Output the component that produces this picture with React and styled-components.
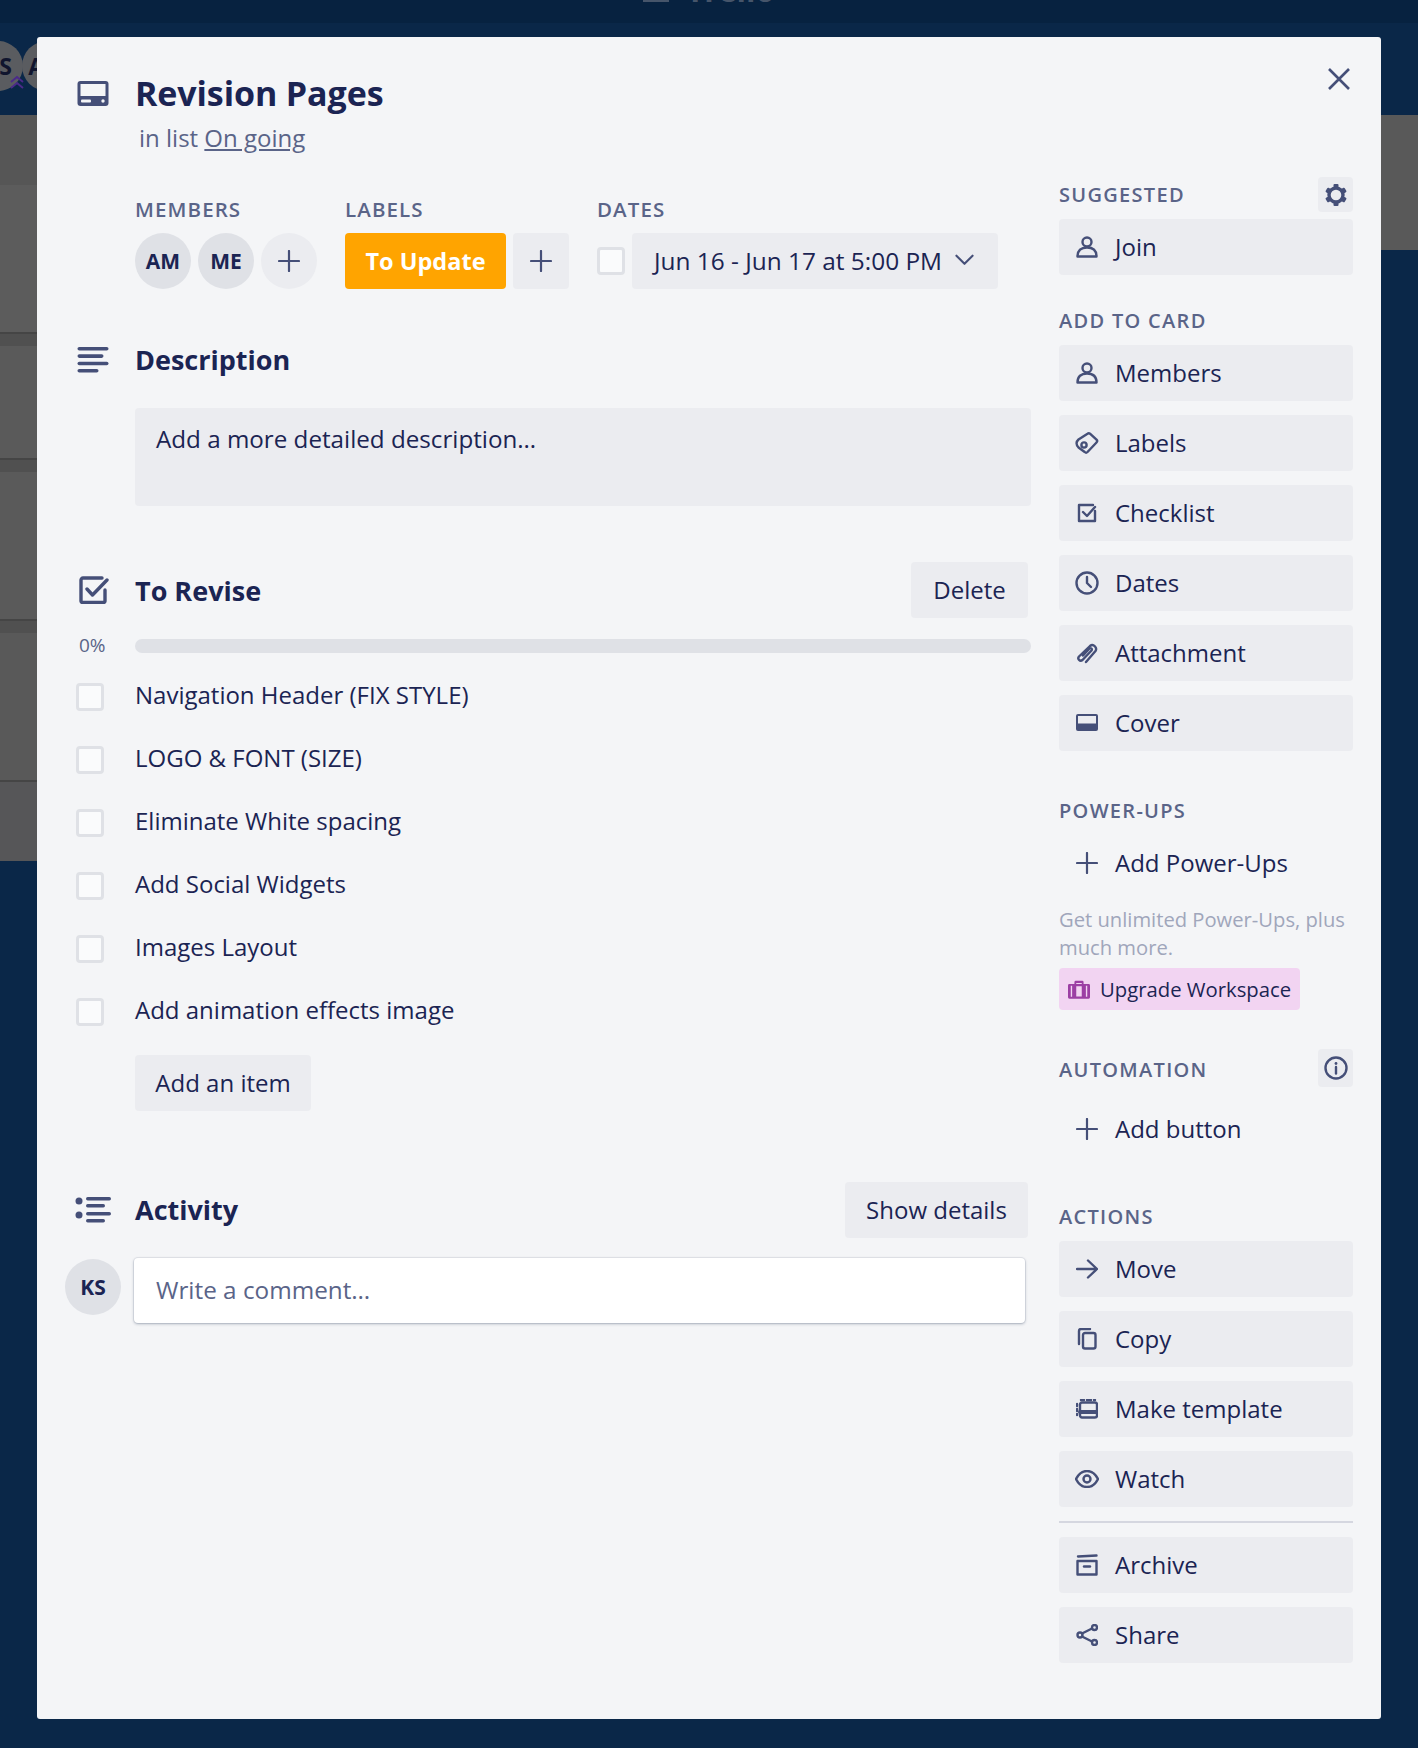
import React from "react"
import styled, { createGlobalStyle } from "styled-components"

const GlobalStyle = createGlobalStyle`
  html, body {
    margin: 0;
    padding: 0;
    background: #0a2748;
  }
  body {
    font-family: "Open Sans", "Noto Sans", sans-serif;
    color: #1b2453;
  }
`

const ink = "#454f78"

const Page = styled.div`
  position: relative;
  width: 1418px;
  height: 1748px;
  overflow: hidden;
  background: #0a2748;
`
const TopBar = styled.div`
  height: 23px;
  background: #072240;
  display: flex;
  justify-content: center;
  overflow: hidden;
  color: #46556a;
`
const TopLogo = styled.div`
  display: flex;
  align-items: flex-end;
  gap: 17px;
  height: 2px;
  font-size: 31px;
  font-weight: 700;
  line-height: 1;
`
const LogoMark = styled.span`
  display: block;
  width: 26px;
  height: 26px;
  background: #46556a;
`
const LogoText = styled.span`
  margin-bottom: -4px;
`
const AvatarStrip = styled.div`
  height: 92px;
  position: relative;
`
const BackAvatar = styled.div`
  position: absolute;
  top: 18px;
  left: ${(p) => p.$x}px;
  width: 50px;
  height: 50px;
  border-radius: 50%;
  background: #5a5c60;
  color: #10152e;
  font-size: 23px;
  font-weight: 700;
  line-height: 50px;
  text-align: center;
`
const BackChevron = styled.svg`
  position: absolute;
  top: 52px;
  left: 9px;
  width: 16px;
  height: 15px;
`
const Lists = styled.div`
  display: flex;
  justify-content: space-between;
`
const LeftEdge = styled.div`
  width: 37px;
  display: flex;
  flex-direction: column;
`
const EdgeStripe = styled.div`
  height: ${(p) => p.$h}px;
  background: ${(p) => p.$bg};
  border-top: ${(p) => (p.$line ? "2px solid #454545" : "none")};
  box-sizing: border-box;
`
const RightEdge = styled.div`
  width: 37px;
  height: 135px;
  background: #595959;
`

const Modal = styled.div`
  position: absolute;
  left: 37px;
  top: 37px;
  width: 1344px;
  height: 1682px;
  border-radius: 3px;
  background: #f4f5f7;
`
const CloseIcon = styled.svg`
  position: absolute;
  right: 30px;
  top: 30px;
  width: 24px;
  height: 24px;
`
const ModalBody = styled.div`
  display: grid;
  grid-template-columns: 994px 294px;
  column-gap: 28px;
`
const Main = styled.div`
  padding-top: 37px;
`
const Row = styled.div`
  display: grid;
  grid-template-columns: 98px 1fr;
  align-items: center;
  height: ${(p) => p.$h || 40}px;
  margin-top: ${(p) => p.$top || 0}px;
`
const IconCell = styled.div`
  display: flex;
  padding-left: ${(p) => p.$left ?? 40}px;
  align-items: center;
`
const RowContent = styled.div`
  display: flex;
  align-items: center;
  justify-content: space-between;
  padding-right: 3px;
`
const Title = styled.h1`
  margin: 0;
  padding-bottom: 2px;
  font-size: 34px;
  font-weight: 700;
  line-height: 38px;
  letter-spacing: -0.1px;
`
const SubTitle = styled.div`
  margin-top: 6px;
  padding-left: 102px;
  height: 36px;
  font-size: 24px;
  line-height: 36px;
  color: #5a6488;

  a {
    color: #5a6488;
    text-decoration: underline;
  }
`
const Heading = styled.h2`
  margin: 0;
  padding-top: ${(p) => (p.$low ? 2 : 0)}px;
  font-size: 27px;
  font-weight: 700;
  line-height: 38px;
`
const Meta = styled.div`
  display: flex;
  margin: 39px 0 0 98px;
`
const MetaGroup = styled.div`
  width: ${(p) => p.$w}px;
`
const MetaLabel = styled.div`
  height: 28px;
  margin-bottom: 10px;
  font-size: 20.5px;
  font-weight: 600;
  letter-spacing: 1.1px;
  line-height: 28px;
  color: #5a6488;
`
const MetaItems = styled.div`
  display: flex;
  align-items: center;
  gap: 7px;
`
const Avatar = styled.div`
  width: 56px;
  height: 56px;
  flex: none;
  border-radius: 50%;
  background: ${(p) => (p.$add ? "#ebecf0" : "#dfe1e6")};
  display: flex;
  align-items: center;
  justify-content: center;
  font-size: 21px;
  font-weight: 700;
`
const LabelChip = styled.div`
  width: 161px;
  height: 56px;
  border-radius: 4px;
  background: #ffa400;
  color: #fff;
  font-size: 23.5px;
  font-weight: 700;
  line-height: 56px;
  text-align: center;
`
const SquareAdd = styled.div`
  width: 56px;
  height: 56px;
  border-radius: 4px;
  background: #ebecf0;
  display: flex;
  align-items: center;
  justify-content: center;
`
const Check = styled.div`
  width: 28px;
  height: 28px;
  flex: none;
  box-sizing: border-box;
  border: 3.5px solid #dfe1e6;
  border-radius: 4px;
  background: #fafbfc;
`
const DateButton = styled.div`
  width: 366px;
  height: 56px;
  border-radius: 4px;
  background: #ebecf0;
  box-sizing: border-box;
  padding: 0 24px 2px 22px;
  display: flex;
  align-items: center;
  justify-content: space-between;
  font-size: 24.4px;
  white-space: nowrap;
`
const DescBox = styled.div`
  margin: 28px 0 0 98px;
  height: 98px;
  border-radius: 4px;
  background: #ebecf0;
  box-sizing: border-box;
  padding: 14px 21px;
  font-size: 24.2px;
  line-height: 34px;
`
const GreyButton = styled.div`
  display: inline-flex;
  align-items: center;
  justify-content: center;
  height: 56px;
  width: ${(p) => p.$w}px;
  padding-bottom: 2px;
  box-sizing: border-box;
  border-radius: 4px;
  background: #ebecf0;
  font-size: 24px;
  white-space: nowrap;
  margin-left: ${(p) => p.$left || 0}px;
`
const Percent = styled.div`
  padding: 0 0 2px 42px;
  font-size: 19px;
  color: #5a6488;
`
const Track = styled.div`
  height: 14px;
  border-radius: 7px;
  background: #dfe1e6;
`
const Items = styled.div`
  margin-top: 3px;
  margin-bottom: 14px;
`
const Item = styled.div`
  display: grid;
  grid-template-columns: 98px 1fr;
  align-items: center;
  height: 63px;
  font-size: 24px;
`
const ItemCheck = styled.div`
  display: flex;
  padding: 4px 0 0 39px;
`
const CommentRow = styled.div`
  display: flex;
  gap: 13px;
  margin: 20px 0 0 28px;
`
const CommentAvatar = styled(Avatar)`
  margin-top: 1px;
`
const CommentBox = styled.div`
  width: 891px;
  height: 65px;
  box-sizing: border-box;
  padding: 0 22px;
  border-radius: 4px;
  background: #fff;
  box-shadow: 0 1px 3px rgba(9, 30, 66, 0.3), 0 0 0 1px rgba(9, 30, 66, 0.06);
  font-size: 24.3px;
  line-height: 63px;
  color: #5a6488;
`

const Sidebar = styled.aside`
  padding-top: 140px;
`
const SideHeader = styled.div`
  display: flex;
  align-items: center;
  justify-content: space-between;
  height: ${(p) => p.$h || 35}px;
  margin-top: ${(p) => p.$top || 0}px;
  margin-bottom: ${(p) => p.$bottom ?? 7}px;
`
const SideLabel = styled.div`
  padding-top: ${(p) => (p.$low ? 2 : 0)}px;
  font-size: 20px;
  font-weight: 600;
  letter-spacing: 1.3px;
  color: #5a6488;
`
const SmallIconButton = styled.div`
  width: 35px;
  height: ${(p) => p.$h || 35}px;
  border-radius: 4px;
  background: #ebecf0;
  display: flex;
  align-items: center;
  justify-content: center;
`
const SideStack = styled.div`
  display: flex;
  flex-direction: column;
  gap: 14px;
`
const SideButton = styled.div`
  height: 56px;
  display: flex;
  align-items: center;
  border-radius: 4px;
  background: ${(p) => (p.$plain ? "transparent" : "#ebecf0")};
  font-size: 24px;
  white-space: nowrap;
`
const SideText = styled.span`
  padding-bottom: 2px;
`
const SideIcon = styled.span`
  display: flex;
  align-items: center;
  justify-content: center;
  flex: none;
  width: 28px;
  margin: 0 14px;
`
const Hint = styled.div`
  margin-top: 14px;
  font-size: 20.2px;
  line-height: 28px;
  color: #a0a6bb;
`
const Upgrade = styled.div`
  display: inline-flex;
  align-items: center;
  gap: 10px;
  margin-top: 7px;
  width: 241px;
  box-sizing: border-box;
  height: 42px;
  padding-left: 9px;
  border-radius: 4px;
  background: #f2d4f2;
  font-size: 20.3px;
  white-space: nowrap;
`
const UpgradeRow = styled.div`
  display: flex;
`
const Divider = styled.div`
  height: 2px;
  background: #d5d7e0;
`

const strokeProps = {
  fill: "none",
  stroke: ink,
  strokeWidth: 2.4,
  strokeLinecap: "round",
  strokeLinejoin: "round",
}

const CardIcon = () => (
  <svg width="32" height="26" viewBox="0 0 32 26">
    <rect x="0.5" width="31" height="25" rx="3" fill={ink} />
    <rect x="3.5" y="3" width="25" height="12" fill="#f4f5f7" />
    <rect x="4" y="18.5" width="10" height="3" rx="1" fill="#f4f5f7" />
    <circle cx="26" cy="20" r="1.7" fill="#f4f5f7" />
  </svg>
)
const DescIcon = () => (
  <svg width="32" height="26" viewBox="0 0 32 26">
    <g fill={ink}>
      <rect y="0" x="0.5" width="31" height="3.6" rx="1.8" />
      <rect y="7.3" x="0.5" width="26" height="3.6" rx="1.8" />
      <rect y="14.7" x="0.5" width="31" height="3.6" rx="1.8" />
      <rect y="22" x="0.5" width="21" height="3.6" rx="1.8" />
    </g>
  </svg>
)
const CheckIcon = () => (
  <svg width="30" height="28" viewBox="0 0 30 28">
    <path d="M23 2H4a2 2 0 0 0-2 2v21a1.5 1.5 0 0 0 1.500 1.500h21a1.500 1.500 0 0 0 1.500-1.500V14" fill="none" stroke={ink} strokeWidth="3.4" strokeLinecap="round" />
    <path d="M8 13l5.500 6L28 4" fill="none" stroke={ink} strokeWidth="3.4" strokeLinecap="round" strokeLinejoin="round" />
  </svg>
)
const ActivityIcon = () => (
  <svg width="36" height="26" viewBox="0 0 36 26">
    <g fill={ink}>
      <circle cx="4" cy="4" r="3.500" />
      <circle cx="4" cy="18" r="3.500" />
      <rect x="11" y="0" width="25" height="3.4" rx="1.700" />
      <rect x="11" y="7" width="19" height="3.4" rx="1.700" />
      <rect x="11" y="15" width="25" height="3.4" rx="1.700" />
      <rect x="11" y="22" width="19" height="3.4" rx="1.700" />
    </g>
  </svg>
)
const Plus = ({ size = 22 }) => (
  <svg width={size} height={size} viewBox="0 0 22 22">
    <path d="M11 1v20M1 11h20" fill="none" stroke={ink} strokeWidth="2.2" strokeLinecap="round" />
  </svg>
)
const Chevron = () => (
  <svg width="19" height="12" viewBox="0 0 20 12">
    <path d="M1.500 1.500L10 10l8.500-8.500" fill="none" stroke={ink} strokeWidth="2.200" strokeLinecap="round" strokeLinejoin="round" />
  </svg>
)
const GearIcon = () => (
  <svg width="22" height="22" viewBox="0 0 22 22">
    <circle cx="11" cy="11" r="7" fill="none" stroke={ink} strokeWidth="3.400" />
    <g fill={ink}>
      <rect x="8.500" y="0" width="5" height="3.500" rx="1" />
      <rect x="8.500" y="18.500" width="5" height="3.500" rx="1" />
      <rect x="8.500" y="0" width="5" height="3.500" rx="1" transform="rotate(60 11 11)" />
      <rect x="8.500" y="0" width="5" height="3.500" rx="1" transform="rotate(120 11 11)" />
      <rect x="8.500" y="0" width="5" height="3.500" rx="1" transform="rotate(240 11 11)" />
      <rect x="8.500" y="0" width="5" height="3.500" rx="1" transform="rotate(300 11 11)" />
    </g>
  </svg>
)
const InfoIcon = () => (
  <svg width="24" height="24" viewBox="0 0 24 24">
    <circle cx="12" cy="12" r="10.500" {...strokeProps} />
    <circle cx="12" cy="7.500" r="1.400" fill={ink} />
    <path d="M12 11v6.500" {...strokeProps} />
  </svg>
)

const sideIcons = {
  user: (
    <svg width="22" height="22" viewBox="0 0 22 22">
      <circle cx="11" cy="6" r="4.500" {...strokeProps} />
      <path d="M1.500 20.500c0-6 3.500-9 9.500-9s9.500 3 9.500 9z" {...strokeProps} />
    </svg>
  ),
  label: (
    <svg width="24" height="24" viewBox="0 0 24 24">
      <path d="M12.500 2.700a2 2 0 0 1 2.500 0l6.500 6a2 2 0 0 1 0 2.800l-9 9.500a2 2 0 0 1-2.800 0L3.500 16.500C.8 13.700 1 10.700 3.500 8.500z" {...strokeProps} />
      <circle cx="9" cy="14" r="2.600" {...strokeProps} />
    </svg>
  ),
  check: (
    <svg width="20" height="20" viewBox="0 0 20 20">
      <path d="M18 8V18H2V2h14" {...strokeProps} />
      <path d="M6 9l4 4 8-9" {...strokeProps} />
    </svg>
  ),
  clock: (
    <svg width="24" height="24" viewBox="0 0 24 24">
      <circle cx="12" cy="12" r="10.500" {...strokeProps} />
      <path d="M12 6v6l4 4" {...strokeProps} />
    </svg>
  ),
  clip: (
    <svg width="22" height="22" viewBox="0 0 22 22">
      <path d="M10 20L19.500 9c2-3-2-8-5.500-5L3 14.500c-2 2.500 1 5.500 3.500 3.500l9-9.500c1-1.500-.5-3-2-2L7 13.500" {...strokeProps} />
    </svg>
  ),
  cover: (
    <svg width="22" height="18" viewBox="0 0 22 18">
      <rect width="22" height="17" rx="2" fill={ink} />
      <rect x="2" y="2" width="18" height="7.500" fill="#ebecf0" />
    </svg>
  ),
  plus: <Plus />,
  arrow: (
    <svg width="22" height="20" viewBox="0 0 22 20">
      <path d="M1 10h20M12 1.500l9 8.500-9 8.500" {...strokeProps} />
    </svg>
  ),
  copy: (
    <svg width="20" height="22" viewBox="0 0 20 22">
      <rect x="6" y="5" width="12.500" height="15.500" rx="2" {...strokeProps} />
      <path d="M2 16V3a2 2 0 0 1 2-2h9" {...strokeProps} />
    </svg>
  ),
  template: (
    <svg width="22" height="20" viewBox="0 0 22 20">
      <rect x="4" y="3.500" width="17" height="15" rx="2" {...strokeProps} />
      <path d="M4 13h17" {...strokeProps} strokeWidth="4" />
      <path d="M1 5v2M1 10v2M1 15v1M5 1h3M11 1h4M18 1h1" {...strokeProps} />
    </svg>
  ),
  eye: (
    <svg width="24" height="18" viewBox="0 0 24 18">
      <path d="M1 9c2.500-5 6.500-8 11-8s8.500 3 11 8c-2.500 5-6.500 8-11 8S3.500 14 1 9z" {...strokeProps} />
      <circle cx="12" cy="9" r="3.500" {...strokeProps} />
    </svg>
  ),
  archive: (
    <svg width="22" height="22" viewBox="0 0 22 22">
      <path d="M2 2.500L20.500 1.500" {...strokeProps} />
      <rect x="1.500" y="7" width="19" height="13.500" {...strokeProps} />
      <path d="M8 12.500h6" {...strokeProps} />
    </svg>
  ),
  share: (
    <svg width="22" height="22" viewBox="0 0 22 22">
      <circle cx="4" cy="11" r="2.500" {...strokeProps} />
      <circle cx="18.500" cy="3.500" r="2.500" {...strokeProps} />
      <circle cx="18.500" cy="18.500" r="2.500" {...strokeProps} />
      <path d="M6 9.500l10-5M6 12.500l10 5" {...strokeProps} />
    </svg>
  ),
}

const checklist = [
  "Navigation Header (FIX STYLE)",
  "LOGO & FONT (SIZE)",
  "Eliminate White spacing",
  "Add Social Widgets",
  "Images Layout",
  "Add animation effects image",
]
const addToCard = [
  ["user", "Members"],
  ["label", "Labels"],
  ["check", "Checklist"],
  ["clock", "Dates"],
  ["clip", "Attachment"],
  ["cover", "Cover"],
]
const actions = [
  ["arrow", "Move"],
  ["copy", "Copy"],
  ["template", "Make template"],
  ["eye", "Watch"],
]
const edgeStripes = [
  [70, "#565656"],
  [147, "#5c5c5c"],
  [14, "#505050", true],
  [112, "#5a5a5a"],
  [14, "#505050", true],
  [147, "#5a5a5a"],
  [14, "#505050", true],
  [147, "#595959"],
  [81, "#565658", true],
]

function SideAction({ icon, label, plain }) {
  return (
    <SideButton $plain={plain}>
      <SideIcon>{sideIcons[icon]}</SideIcon>
      <SideText>{label}</SideText>
    </SideButton>
  )
}

export default function App() {
  return (
    <Page>
      <GlobalStyle />
      <TopBar>
        <TopLogo>
          <LogoMark />
          <LogoText>Trello</LogoText>
        </TopLogo>
      </TopBar>
      <AvatarStrip>
        <BackAvatar $x={-27}>KS</BackAvatar>
        <BackAvatar $x={22}>AM</BackAvatar>
        <BackChevron viewBox="0 0 16 15">
          <path d="M2 7l6-5 6 5M2 13l6-5 6 5" fill="none" stroke="#4b2a8a" strokeWidth="2" />
        </BackChevron>
      </AvatarStrip>
      <Lists>
        <LeftEdge>
          {edgeStripes.map(([h, bg, line], i) => (
            <EdgeStripe key={i} $h={h} $bg={bg} $line={line} />
          ))}
        </LeftEdge>
        <RightEdge />
      </Lists>

      <Modal>
        <CloseIcon viewBox="0 0 24 24">
          <path d="M2 2l20 20M22 2L2 22" fill="none" stroke={ink} strokeWidth="2.600" />
        </CloseIcon>
        <ModalBody>
          <Main>
            <Row>
              <IconCell><CardIcon /></IconCell>
              <Title>Revision Pages</Title>
            </Row>
            <SubTitle>in list <a>On going</a></SubTitle>

            <Meta>
              <MetaGroup $w={210}>
                <MetaLabel>MEMBERS</MetaLabel>
                <MetaItems>
                  <Avatar>AM</Avatar>
                  <Avatar>ME</Avatar>
                  <Avatar $add><Plus /></Avatar>
                </MetaItems>
              </MetaGroup>
              <MetaGroup $w={252}>
                <MetaLabel>LABELS</MetaLabel>
                <MetaItems>
                  <LabelChip>To Update</LabelChip>
                  <SquareAdd><Plus /></SquareAdd>
                </MetaItems>
              </MetaGroup>
              <MetaGroup $w={401}>
                <MetaLabel>DATES</MetaLabel>
                <MetaItems>
                  <Check />
                  <DateButton>
                    Jun 16 - Jun 17 at 5:00 PM
                    <Chevron />
                  </DateButton>
                </MetaItems>
              </MetaGroup>
            </Meta>

            <Row $top={51}>
              <IconCell><DescIcon /></IconCell>
              <Heading>Description</Heading>
            </Row>
            <DescBox>Add a more detailed description…</DescBox>

            <Row $top={56} $h={56}>
              <IconCell $left={42}><CheckIcon /></IconCell>
              <RowContent>
                <Heading $low>To Revise</Heading>
                <GreyButton $w={117}>Delete</GreyButton>
              </RowContent>
            </Row>
            <Row $top={14} $h={28}>
              <Percent>0%</Percent>
              <Track />
            </Row>
            <Items>
              {checklist.map((text) => (
                <Item key={text}>
                  <ItemCheck><Check /></ItemCheck>
                  {text}
                </Item>
              ))}
            </Items>
            <GreyButton $w={176} $left={98}>Add an item</GreyButton>

            <Row $top={71} $h={56}>
              <IconCell $left={38}><ActivityIcon /></IconCell>
              <RowContent>
                <Heading>Activity</Heading>
                <GreyButton $w={183}>Show details</GreyButton>
              </RowContent>
            </Row>
            <CommentRow>
              <CommentAvatar>KS</CommentAvatar>
              <CommentBox>Write a comment…</CommentBox>
            </CommentRow>
          </Main>

          <Sidebar>
            <SideHeader>
              <SideLabel>SUGGESTED</SideLabel>
              <SmallIconButton><GearIcon /></SmallIconButton>
            </SideHeader>
            <SideAction icon="user" label="Join" />

            <SideHeader $top={28}>
              <SideLabel>ADD TO CARD</SideLabel>
            </SideHeader>
            <SideStack>
              {addToCard.map(([icon, label]) => (
                <SideAction key={label} icon={icon} label={label} />
              ))}
            </SideStack>

            <SideHeader $top={42}>
              <SideLabel>POWER-UPS</SideLabel>
            </SideHeader>
            <SideAction plain icon="plus" label="Add Power-Ups" />
            <Hint>Get unlimited Power-Ups, plus<br />much more.</Hint>
            <UpgradeRow>
              <Upgrade>
                <svg width="22" height="19" viewBox="0 0 24 20">
                  <path d="M7 4V2a1.500 1.500 0 0 1 1.500-1.500h7A1.500 1.500 0 0 1 17 2v2h5.500A1.500 1.500 0 0 1 24 5.500v13a1.500 1.500 0 0 1-1.500 1.500h-21A1.500 1.500 0 0 1 0 18.500v-13A1.500 1.500 0 0 1 1.500 4z" fill="#9c3fa4" />
                  <path d="M9 3h6v1H9zM3 6v12h1.500V6zM19.500 6v12H21V6zM9 6.500v11h6v-11z" fill="#f2d4f2" />
                </svg>
                Upgrade Workspace
              </Upgrade>
            </UpgradeRow>

            <SideHeader $top={39} $h={38} $bottom={14}>
              <SideLabel $low>AUTOMATION</SideLabel>
              <SmallIconButton $h={38}><InfoIcon /></SmallIconButton>
            </SideHeader>
            <SideAction plain icon="plus" label="Add button" />

            <SideHeader $top={42}>
              <SideLabel>ACTIONS</SideLabel>
            </SideHeader>
            <SideStack>
              {actions.map(([icon, label]) => (
                <SideAction key={label} icon={icon} label={label} />
              ))}
              <Divider />
              <SideAction icon="archive" label="Archive" />
              <SideAction icon="share" label="Share" />
            </SideStack>
          </Sidebar>
        </ModalBody>
      </Modal>
    </Page>
  )
}
